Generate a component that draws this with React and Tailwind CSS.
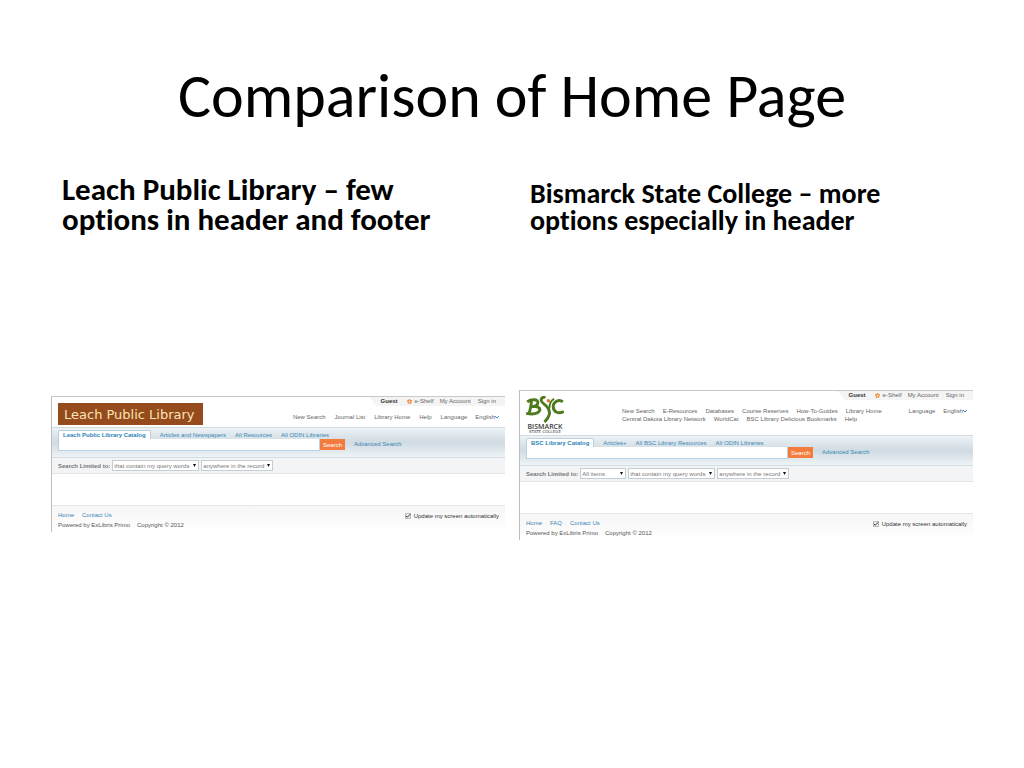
import React from 'react';
import { Star, Check } from 'lucide-react';

const leach = {
  id: 'leach',
  tabs: ['Leach Public Library Catalog', 'Articles and Newspapers', 'All Resources', 'All ODIN Libraries'],
  filters: [
    { label: 'Query match', value: 'that contain my query words', width: 'w-[87px]' },
    { label: 'Record field', value: 'anywhere in the record', width: 'w-[72px]' },
  ],
  footer: ['Home', 'Contact Us'],
};

const bismarck = {
  id: 'bismarck',
  tabs: ['BSC Library Catalog', 'Articles+', 'All BSC Library Resources', 'All ODIN Libraries'],
  filters: [
    { label: 'Item type', value: 'All items', width: 'w-[46px]' },
    { label: 'Query match', value: 'that contain my query words', width: 'w-[87px]' },
    { label: 'Record field', value: 'anywhere in the record', width: 'w-[72px]' },
  ],
  footer: ['Home', 'FAQ', 'Contact Us'],
};

const NavLink = ({ children }) => (
  <a href="#" className="whitespace-nowrap">{children}</a>
);

const LanguageLinks = () => (
  <div className="flex gap-2">
    <NavLink>Language</NavLink>
    <a href="#" className="flex items-center whitespace-nowrap">
      English
      <svg className="w-1 h-1" viewBox="0 0 8 8" fill="none" aria-hidden="true">
        <path d="M0 2L4 6L8 2" stroke="#2f8fd0" strokeWidth="2" />
      </svg>
    </a>
  </div>
);

const UserBar = () => (
  <div className="flex justify-end">
    <div className="relative flex items-start h-[9px] pl-3 pr-[9px] text-[#666]">
      <svg className="absolute inset-0 w-full h-full" viewBox="0 0 134 9" preserveAspectRatio="none" aria-hidden="true">
        <path d="M0 0H134V9H8C5 9 5 3 0 0Z" fill="#f4f4f4" />
      </svg>
      <div className="relative flex items-center">
        <span className="font-bold text-[#333] mr-[9px]">Guest</span>
        <Star className="w-[5px] h-[5px] mr-[3px] text-[#f08a3c]" strokeWidth={5} />
        <a href="#" className="mr-[6px]">e-Shelf</a>
        <a href="#" className="mr-[7px]">My Account</a>
        <a href="#">Sign in</a>
      </div>
    </div>
  </div>
);

const LeachHeader = () => (
  <div className="flex items-start justify-between h-6 -mt-[3px] px-[6px]">
    <div className="h-[22px] w-[145px] bg-[#954b1c] pl-[6px] text-[13px] leading-6 text-[#fbe3b4] font-['DejaVu_Sans',sans-serif] whitespace-nowrap">
      Leach Public Library
    </div>
    <nav className="flex gap-[9px] pt-[10px]">
      <NavLink>New Search</NavLink>
      <NavLink>Journal List</NavLink>
      <NavLink>Library Home</NavLink>
      <NavLink>Help</NavLink>
      <LanguageLinks />
    </nav>
  </div>
);

const BscLogo = () => (
  <div className="w-[38px] text-center text-[#3c3c3c]">
    <svg className="block w-[38px] h-[27px]" viewBox="0 0 39 28" fill="none" role="img" aria-label="BSC">
      <path d="M1 6C5 3 13 3 12 7C12 10 8 11 5 11C11 10 15 12 14 15C12 19 5 19 0 18" stroke="#4c7a1d" strokeWidth="3" />
      <path d="M5 4C6 9 4 14 3 18" stroke="#4c7a1d" strokeWidth="3" />
      <path d="M20 1C15 1 14 5 18 8C22 11 25 14 24 19C23 23 21 25 19 27" stroke="#4c7a1d" strokeWidth="3" />
      <path d="M29 3C25 5 24 8 24 13" stroke="#4c7a1d" strokeWidth="2" />
      <path d="M38 6C34 3 28 6 28 11C28 17 34 19 39 16" stroke="#4c7a1d" strokeWidth="3" />
      <circle cx="23" cy="5" r="1.800" fill="#d9792b" />
    </svg>
    <div className="text-[7px] leading-[7px] font-semibold font-['Open_Sans',sans-serif]">BISMARCK</div>
    <div className="text-[4px] leading-[4px] whitespace-nowrap font-['DejaVu_Sans',sans-serif]">STATE COLLEGE</div>
  </div>
);

const BismarckHeader = () => (
  <div className="flex h-[35px] pl-[6px] pr-[6px]">
    <div className="-mt-1">
      <BscLogo />
    </div>
    <div className="flex flex-1 items-start justify-between pl-[58px] pt-[7px]">
      <nav>
        <div className="flex gap-2">
          <NavLink>New Search</NavLink>
          <NavLink>E-Resources</NavLink>
          <NavLink>Databases</NavLink>
          <NavLink>Course Reserves</NavLink>
          <NavLink>How-To-Guides</NavLink>
          <NavLink>Library Home</NavLink>
        </div>
        <div className="flex gap-2">
          <NavLink>Central Dakota Library Network</NavLink>
          <NavLink>WorldCat</NavLink>
          <NavLink>BSC Library Delicious Bookmarks</NavLink>
          <NavLink>Help</NavLink>
        </div>
      </nav>
      <LanguageLinks />
    </div>
  </div>
);

const SearchBand = ({ id, tabs }) => (
  <div className="h-[31px] pt-[2px] pl-[6px] border-y border-[#d3dce2] bg-linear-to-b from-[#edf2f5] via-[#cfdbe2] to-[#eef3f6] text-[#3a86b5]">
    <div className="flex items-center h-[9px] gap-[9px]">
      <button type="button" className="h-[9px] px-1 rounded-t-xs border border-b-0 border-[#bcd0dc] bg-white font-bold leading-2 text-[#2f83b9] whitespace-nowrap">
        {tabs[0]}
      </button>
      {tabs.slice(1).map((tab) => (
        <button type="button" key={tab} className="leading-2 whitespace-nowrap">{tab}</button>
      ))}
    </div>
    <div className="flex items-start">
      <input id={`${id}-query`} aria-label="Search the catalog" className="w-[262px] h-3 px-1 border border-t-0 border-[#b5d3e2] bg-white" />
      <button type="button" className="h-[11px] w-[25px] mr-[9px] bg-[#f47b3e] text-white">Search</button>
      <a href="#" className="pt-px">Advanced Search</a>
    </div>
  </div>
);

const Filters = ({ id, filters }) => (
  <div className="flex items-center h-4 pl-[6px] gap-[2px] border-b border-[#e4e4e4] bg-[#f3f4f5]">
    <span className="font-bold text-[#777] whitespace-nowrap">Search Limited to:</span>
    {filters.map((f) => (
      <div key={f.label} className="relative">
        <select name={`${id}-${f.label}`} aria-label={f.label} className={`block appearance-none h-[11px] pl-px border border-[#c3cdd3] bg-white text-[#777] ${f.width}`}>
          <option>{f.value}</option>
        </select>
        <svg className="absolute right-[3px] top-1 w-[3px] h-[3px] pointer-events-none" viewBox="0 0 4 4" aria-hidden="true">
          <path d="M0 0H4L2 4Z" fill="#111" />
        </svg>
      </div>
    ))}
  </div>
);

const PageFooter = ({ id, links }) => (
  <div className="flex justify-between items-start h-[27px] px-[6px] pt-1 border-t border-[#e6e6e6] bg-linear-to-b from-[#f6f6f6] to-white">
    <div className="leading-[10px]">
      <div className="flex gap-2 text-[#3a86b5]">
        {links.map((link) => <a href="#" key={link}>{link}</a>)}
      </div>
      <div className="flex gap-[7px] text-[#555]">
        <span>Powered by ExLibris Primo</span>
        <span>Copyright © 2012</span>
      </div>
    </div>
    <label htmlFor={`${id}-update`} className="flex items-center gap-[3px] pt-px leading-[10px] text-[#333]">
      <span className="relative flex">
        <input id={`${id}-update`} type="checkbox" defaultChecked className="peer appearance-none w-[6px] h-[6px] border border-[#bbb] bg-[#eee]" />
        <Check className="absolute inset-0 w-[6px] h-[6px] text-[#333] pointer-events-none invisible peer-checked:visible" strokeWidth={4} />
      </span>
      Update my screen automatically
    </label>
  </div>
);

const CatalogPage = ({ site, children }) => (
  <div className="border-t border-l border-t-[#c9c9c9] border-l-[#bdbdbd] bg-white text-[6px] leading-2 text-[#666] font-['Liberation_Sans',Arial,sans-serif]">
    <UserBar />
    {children}
    <SearchBand id={site.id} tabs={site.tabs} />
    <Filters id={site.id} filters={site.filters} />
    <div className="h-[31px]" />
    <PageFooter id={site.id} links={site.footer} />
  </div>
);

export default function App() {
  return (
    <main className="min-h-screen bg-white px-[51px] pt-[60px] text-black [font-variant-ligatures:none] font-[Calibri,Carlito,'Open_Sans',sans-serif]">
      <h1 className="text-center text-[62px] leading-[72px]">Comparison of Home Page</h1>
      <div className="grid grid-cols-2 items-end gap-x-[14px] pt-[42px] font-bold">
        <h2 className="pl-[11px] text-[31px] leading-[30px]">Leach Public Library – few<br />options in header and footer</h2>
        <h2 className="pl-[11px] text-[28px] leading-[27px]">Bismarck State College – more<br />options especially in header</h2>
      </div>
      <div className="grid grid-cols-2 items-end gap-x-[14px] pt-[156px]">
        <div className="pb-2">
          <CatalogPage site={leach}>
            <LeachHeader />
          </CatalogPage>
        </div>
        <CatalogPage site={bismarck}>
          <BismarckHeader />
        </CatalogPage>
      </div>
    </main>
  );
}
